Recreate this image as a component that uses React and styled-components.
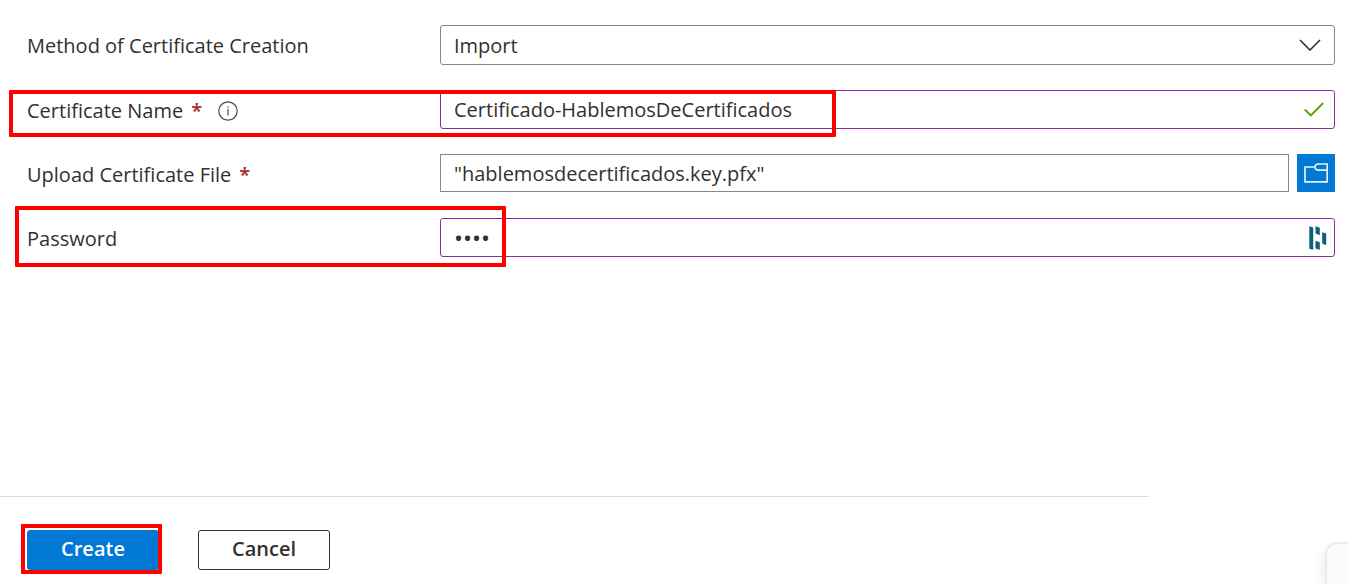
import { useState } from "react";
import styled, { createGlobalStyle } from "styled-components";

export default function App() {
  const [method, setMethod] = useState("Import");
  const [name, setName] = useState("Certificado-HablemosDeCertificados");
  const [password, setPassword] = useState("1234");

  return (
    <>
      <GlobalStyle />
      <Page>
        <Fields>
          <Row>
            <Label htmlFor="method">Method of Certificate Creation</Label>
            <Control>
              <Select
                id="method"
                value={method}
                onChange={(e) => setMethod(e.target.value)}
              >
                <option>Generate</option>
                <option>Import</option>
              </Select>
              <FieldIcon $right={14}>
                <ChevronIcon />
              </FieldIcon>
            </Control>
          </Row>

          <Row>
            <Label htmlFor="name">
              Certificate Name <Required>*</Required>
              <InfoIcon />
            </Label>
            <Control>
              <Input
                id="name"
                type="text"
                $edited
                value={name}
                onChange={(e) => setName(e.target.value)}
              />
              <FieldIcon $right={11}>
                <CheckIcon />
              </FieldIcon>
            </Control>
            <Highlight $top={0} $left={9} $width={827} $height={47} />
          </Row>

          <Row>
            <Label htmlFor="file">
              Upload Certificate File <Required>*</Required>
            </Label>
            <Control>
              <FileInput
                id="file"
                type="text"
                readOnly
                value={'"hablemosdecertificados.key.pfx"'}
              />
              <BrowseButton type="button" aria-label="Browse">
                <FolderIcon />
              </BrowseButton>
            </Control>
          </Row>

          <Row>
            <Label htmlFor="password">Password</Label>
            <Control>
              <PasswordInput
                id="password"
                type="password"
                $edited
                value={password}
                onChange={(e) => setPassword(e.target.value)}
              />
              <FieldIcon $right={8}>
                <VaultIcon />
              </FieldIcon>
            </Control>
            <Highlight $top={-12} $left={15} $width={491} $height={61} />
          </Row>
        </Fields>

        <Divider />
        <Footer>
          <ButtonWrap>
            <Button type="submit" $primary>
              Create
            </Button>
            <Highlight $top={-6} $left={-6} $width={141} $height={50} />
          </ButtonWrap>
          <Button type="button">Cancel</Button>
        </Footer>
      </Page>
      <CornerPanel />
    </>
  );
}

function ChevronIcon() {
  return (
    <svg width="22" height="12" viewBox="0 0 22 12" fill="none">
      <path d="M1 1 L11 11 L21 1" stroke="#323130" strokeWidth="1.6" />
    </svg>
  );
}

function CheckIcon() {
  return (
    <svg width="20" height="15" viewBox="0 0 20 15" fill="none">
      <path d="M0.8 7.5 L6.8 13.5 L19.2 1" stroke="#57a300" strokeWidth="1.8" />
    </svg>
  );
}

function InfoIcon() {
  return (
    <InfoSvg width="20" height="20" viewBox="0 0 20 20" fill="none">
      <circle cx="10" cy="10" r="9.2" stroke="#4a4948" strokeWidth="1.2" />
      <rect x="9.4" y="5.4" width="1.2" height="1.5" fill="#4a4948" />
      <rect x="9.4" y="8" width="1.2" height="6.4" fill="#4a4948" />
    </InfoSvg>
  );
}

function FolderIcon() {
  return (
    <svg width="24" height="20" viewBox="0 0 24 20" fill="none">
      <path
        d="M11 4 H1 V18.8 H23.2 V1 H13.6 L12 1.8 L10.6 4 L12 6.4 L13.6 7.2 H23.2"
        stroke="#e6f2fb"
        strokeWidth="1.7"
      />
    </svg>
  );
}

function VaultIcon() {
  return (
    <svg width="18" height="24" viewBox="0 0 18 24" fill="#0e6074">
      <path d="M0.3 0.3 L4.2 1.4 V23.7 L0.3 22.8 Z" />
      <path d="M6.5 0.3 L10.8 1.8 V9.2 L6.5 7.6 Z" />
      <path d="M6.5 14.8 L10.8 16.2 V23.7 L6.5 22.4 Z" />
      <path d="M13.2 6.2 L17.2 7.6 V19.2 L13.2 17.6 Z" />
    </svg>
  );
}

const GlobalStyle = createGlobalStyle`
  *, *::before, *::after {
    box-sizing: border-box;
  }

  body {
    margin: 0;
    background: #fff;
    color: #323130;
  }

  body, button, input, select {
    font-family: "Open Sans", "Noto Sans", sans-serif;
    font-size: 20px;
  }
`;

const Page = styled.form`
  display: flex;
  flex-direction: column;
  min-height: 100vh;
`;

const Fields = styled.div`
  flex: 1;
  display: flex;
  flex-direction: column;
  gap: 25px;
  padding: 25px 0;
`;

const Row = styled.div`
  position: relative;
  display: grid;
  grid-template-columns: 413px 1fr;
  align-items: start;
  padding: 0 13px 0 27px;
`;

const Label = styled.label`
  display: flex;
  align-items: center;
  gap: 8px;
  height: 39px;
  padding-top: 2px;
`;

const Required = styled.span`
  color: #a4262c;
  font-weight: 600;
`;

const InfoSvg = styled.svg`
  margin-left: 8px;
`;

const Control = styled.div`
  position: relative;
  display: flex;
  gap: 8px;
`;

const Input = styled.input`
  width: 100%;
  min-width: 0;
  height: 39px;
  padding: 0 48px 0 13px;
  border: 1px solid ${({ $edited }) => ($edited ? "#8c2aa4" : "#8a8886")};
  border-radius: 3px;
  background: #fff;
  color: #323130;
  outline: none;
`;

const FileInput = styled(Input)`
  height: 38px;
  border-radius: 0;
`;

const PasswordInput = styled(Input)`
  font-size: 24px;
`;

const Select = styled.select`
  width: 100%;
  height: 40px;
  padding: 0 48px 0 13px;
  appearance: none;
  border: 1px solid #8a8886;
  border-radius: 3px;
  background: #fff;
  color: #323130;
  outline: none;
`;

/* sits over the right end of a field */
const FieldIcon = styled.span`
  position: absolute;
  top: 0;
  bottom: 0;
  right: ${({ $right }) => $right}px;
  display: flex;
  align-items: center;
  pointer-events: none;
`;

const BrowseButton = styled.button`
  flex: none;
  display: flex;
  align-items: center;
  justify-content: center;
  width: 38px;
  height: 38px;
  padding: 0;
  border: none;
  background: #0078d4;
  cursor: pointer;
`;

const Highlight = styled.span`
  position: absolute;
  top: ${({ $top }) => $top}px;
  left: ${({ $left }) => $left}px;
  width: ${({ $width }) => $width}px;
  height: ${({ $height }) => $height}px;
  border: 4px solid #ff0000;
  border-radius: 1px;
  pointer-events: none;
`;

const Divider = styled.hr`
  width: calc(100% - 199px);
  height: 1px;
  margin: 0;
  border: none;
  background: #dcdcdc;
`;

const Footer = styled.div`
  display: flex;
  gap: 39px;
  padding: 33px 27px 14px;
`;

const ButtonWrap = styled.div`
  position: relative;
`;

const Button = styled.button`
  width: 132px;
  height: 40px;
  padding: 0 0 4px;
  border: 1px solid ${({ $primary }) => ($primary ? "#0078d4" : "#323130")};
  border-radius: 3px;
  background: ${({ $primary }) => ($primary ? "#0078d4" : "#fff")};
  color: ${({ $primary }) => ($primary ? "#fff" : "#323130")};
  font-weight: 600;
  cursor: pointer;
`;

const CornerPanel = styled.aside`
  position: fixed;
  right: 0;
  bottom: 0;
  width: 23px;
  height: 42px;
  border: 2px solid #ebebeb;
  border-width: 2px 0 0 2px;
  border-radius: 12px 0 0 0;
  background: #fafafa;
  box-shadow: -2px 6px 14px rgba(0, 0, 0, 0.08);
`;
